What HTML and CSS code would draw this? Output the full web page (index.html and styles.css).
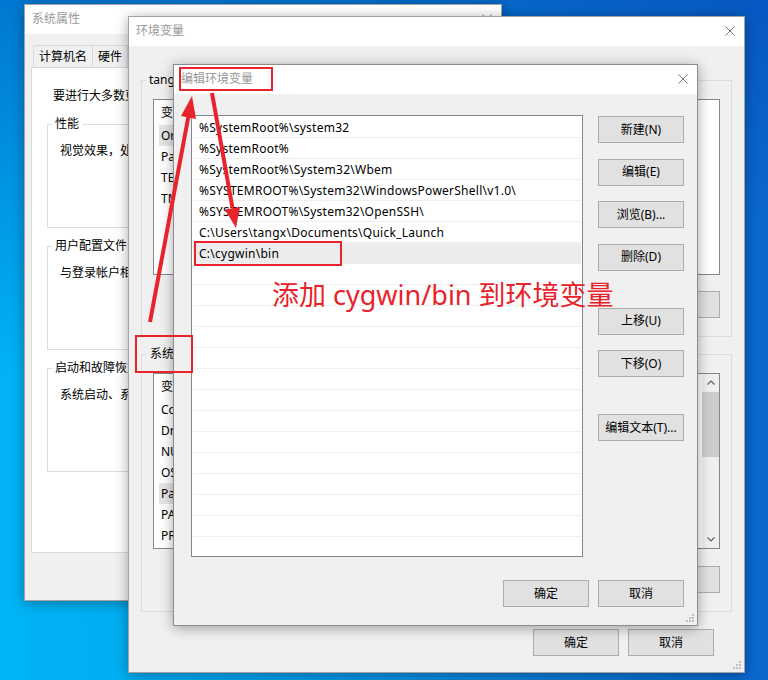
FILE: index.html
```html
<!DOCTYPE html>
<html lang="zh-CN">
<head>
<meta charset="utf-8">
<title>编辑环境变量</title>
<link rel="stylesheet" href="styles.css">
</head>
<body>
<div class="desktop">

  <section class="win win-sys">
    <header class="titlebar">
      <span class="title">系统属性</span>
      <svg class="close" width="10" height="10" viewBox="0 0 10 10"><path d="M0.5 0.5L9.5 9.5M9.5 0.5L0.5 9.5"/></svg>
    </header>
    <div class="sys-body">
      <div class="tabs">
        <span class="tab">计算机名</span>
        <span class="tab">硬件</span>
        <span class="tab">高级</span>
        <span class="tab">系统保护</span>
        <span class="tab">远程</span>
      </div>
      <div class="panel">
        <p class="intro">要进行大多数更改，你必须作为管理员登录。</p>
        <div class="group group-white sys-group">
          <span class="group-label">性能</span>
          <p class="group-text">视觉效果，处理器计划，内存使用，以及虚拟内存</p>
        </div>
        <div class="group group-white sys-group">
          <span class="group-label">用户配置文件</span>
          <p class="group-text">与登录帐户相关的桌面设置</p>
        </div>
        <div class="group group-white sys-group">
          <span class="group-label">启动和故障恢复</span>
          <p class="group-text">系统启动、系统故障和调试信息</p>
        </div>
      </div>
    </div>
  </section>

  <section class="win win-env">
    <header class="titlebar">
      <span class="title">环境变量</span>
      <svg class="close" width="10" height="10" viewBox="0 0 10 10"><path d="M0.5 0.5L9.5 9.5M9.5 0.5L0.5 9.5"/></svg>
    </header>
    <div class="env-body">
      <div class="group group-gray env-group">
        <span class="group-label">tangx 的用户变量(U)</span>
        <div class="lv">
          <div class="lv-main">
            <div class="lv-head"><span class="col-name">变量</span></div>
            <div class="lv-row sel"><span class="col-name">OneDrive</span></div>
            <div class="lv-row"><span class="col-name">Path</span></div>
            <div class="lv-row"><span class="col-name">TEMP</span></div>
            <div class="lv-row"><span class="col-name">TMP</span></div>
          </div>
        </div>
        <div class="btn-row">
          <button class="btn">新建(N)...</button>
          <button class="btn">编辑(E)...</button>
          <button class="btn">删除(D)</button>
        </div>
      </div>

      <div class="group group-gray env-group env-group-sys">
        <span class="group-label">系统变量(S)</span>
        <div class="lv">
          <div class="lv-main">
            <div class="lv-head"><span class="col-name">变量</span></div>
            <div class="lv-row"><span class="col-name">ComSpec</span></div>
            <div class="lv-row"><span class="col-name">DriverData</span></div>
            <div class="lv-row"><span class="col-name">NUMBER_OF_PROCESSORS</span></div>
            <div class="lv-row"><span class="col-name">OS</span></div>
            <div class="lv-row sel"><span class="col-name">Path</span></div>
            <div class="lv-row"><span class="col-name">PATHEXT</span></div>
            <div class="lv-row"><span class="col-name">PROCESSOR_ARCHITECTURE</span></div>
          </div>
          <div class="vscroll">
            <div class="sb-arrow">
              <svg width="8" height="5" viewBox="0 0 8 5"><path d="M0.5 4.5L4 1L7.5 4.5"/></svg>
            </div>
            <div class="sb-thumb"></div>
            <div class="sb-track"></div>
            <div class="sb-arrow">
              <svg width="8" height="5" viewBox="0 0 8 5"><path d="M0.5 0.5L4 4L7.5 0.5"/></svg>
            </div>
          </div>
        </div>
        <div class="btn-row">
          <button class="btn">新建(W)...</button>
          <button class="btn">编辑(I)...</button>
          <button class="btn">删除(L)</button>
        </div>
      </div>

      <div class="dlg-foot env-foot">
        <button class="btn">确定</button>
        <button class="btn">取消</button>
      </div>
    </div>
    <svg class="grip" width="8" height="8" viewBox="0 0 8 8"><rect x="6" y="0" width="2" height="2"/><rect x="3" y="3" width="2" height="2"/><rect x="6" y="3" width="2" height="2"/><rect x="0" y="6" width="2" height="2"/><rect x="3" y="6" width="2" height="2"/><rect x="6" y="6" width="2" height="2"/></svg>
  </section>

  <section class="win win-edit">
    <header class="titlebar">
      <span class="title">编辑环境变量</span>
      <svg class="close" width="10" height="10" viewBox="0 0 10 10"><path d="M0.5 0.5L9.5 9.5M9.5 0.5L0.5 9.5"/></svg>
    </header>
    <div class="edit-body">
      <div class="edit-main">
        <div class="pathlist">
          <div class="path-row">%SystemRoot%\system32</div>
          <div class="path-row">%SystemRoot%</div>
          <div class="path-row">%SystemRoot%\System32\Wbem</div>
          <div class="path-row">%SYSTEMROOT%\System32\WindowsPowerShell\v1.0\</div>
          <div class="path-row">%SYSTEMROOT%\System32\OpenSSH\</div>
          <div class="path-row">C:\Users\tangx\Documents\Quick_Launch</div>
          <div class="path-row sel">C:\cygwin\bin</div>
          <div class="path-row"></div>
          <div class="path-row"></div>
          <div class="path-row"></div>
          <div class="path-row"></div>
          <div class="path-row"></div>
          <div class="path-row"></div>
          <div class="path-row"></div>
          <div class="path-row"></div>
          <div class="path-row"></div>
          <div class="path-row"></div>
          <div class="path-row"></div>
          <div class="path-row"></div>
          <div class="path-row"></div>
          <div class="path-row"></div>
          <div class="path-row"></div>
        </div>
        <div class="side-btns">
          <button class="btn">新建(N)</button>
          <button class="btn">编辑(E)</button>
          <button class="btn">浏览(B)...</button>
          <button class="btn">删除(D)</button>
          <button class="btn big-gap">上移(U)</button>
          <button class="btn">下移(O)</button>
          <button class="btn big-gap">编辑文本(T)...</button>
        </div>
      </div>
      <div class="dlg-foot edit-foot">
        <button class="btn">确定</button>
        <button class="btn">取消</button>
      </div>
    </div>
    <svg class="grip" width="8" height="8" viewBox="0 0 8 8"><rect x="6" y="0" width="2" height="2"/><rect x="3" y="3" width="2" height="2"/><rect x="6" y="3" width="2" height="2"/><rect x="0" y="6" width="2" height="2"/><rect x="3" y="6" width="2" height="2"/><rect x="6" y="6" width="2" height="2"/></svg>
  </section>

  <svg class="annot" width="768" height="680" viewBox="0 0 768 680">
    <rect x="180" y="68" width="92" height="22"/>
    <rect x="136" y="336" width="56" height="36"/>
    <rect x="195" y="242" width="146" height="23"/>
    <line x1="150" y1="322" x2="188.5" y2="116"/>
    <polygon class="head" points="192,96 196,119 181,116"/>
    <line x1="212" y1="93" x2="232.5" y2="208"/>
    <polygon class="head" points="236,228 240,207 225,209.5"/>
  </svg>
  <div class="note">添加 cygwin/bin 到环境变量</div>

</div>
</body>
</html>
```

FILE: styles.css
```css
* { box-sizing: border-box; }

body { margin: 0; }

.desktop {
  position: relative;
  width: 768px;
  height: 680px;
  overflow: hidden;
  font-family: "Noto Sans", "Noto Sans CJK SC", sans-serif;
  font-size: 12px;
  line-height: 18px;
  color: #000;
  background:
    linear-gradient(168deg, rgba(0, 45, 165, 0.45) 0%, rgba(0, 45, 165, 0) 45%),
    linear-gradient(90deg, #00b4f5 0%, #00acf2 22%, #0592e3 50%, #0a78d6 75%, #0a66cd 100%);
}

p { margin: 0; }

/* ---------- windows ---------- */
.win {
  position: absolute;
  display: flex;
  flex-direction: column;
  background: #f0f0f0;
  border: 1px solid #a3a3a3;
  box-shadow: 0 2px 12px rgba(0, 0, 0, 0.35);
  overflow: hidden;
}
.win-sys  { left: 24px;  top: 4px;  width: 478px; height: 597px; }
.win-env  { left: 128px; top: 16px; width: 617px; height: 657px; }
.win-edit { left: 173px; top: 64px; width: 525px; height: 562px; border-color: #8c8c8c; }

.titlebar {
  flex: none;
  height: 29px;
  background: #fff;
  display: flex;
  align-items: center;
  justify-content: space-between;
  padding: 0 9px 2px 7px;
}
.title { color: #999; }
.close path { stroke: #777; stroke-width: 1; fill: none; }

.grip { position: absolute; right: 3px; bottom: 3px; }
.grip rect { fill: #bdbdbd; }

/* ---------- buttons ---------- */
.btn {
  width: 86px;
  height: 27px;
  padding: 0;
  margin: 0;
  background: #e1e1e1;
  border: 1px solid #adadad;
  border-radius: 0;
  font: inherit;
  color: #000;
  display: flex;
  align-items: center;
  justify-content: center;
  flex: none;
}

/* ---------- group boxes ---------- */
.group { border: 1px solid #dcdcdc; }
.group-label {
  display: block;
  width: max-content;
  margin: -10px 0 0 4px;
  padding: 0 3px;
  line-height: 18px;
}
.group-white .group-label { background: #fff; }
.group-gray .group-label { background: #f0f0f0; }

/* ---------- system properties ---------- */
.sys-body { padding: 11px 6px 0; }
.tabs { display: flex; height: 22px; margin-left: 2px; }
.tab {
  border: 1px solid #d9d9d9;
  border-bottom: none;
  background: #f0f0f0;
  padding: 0 5px;
  line-height: 21px;
  margin-right: -1px;
  white-space: nowrap;
}
.panel {
  height: 486px;
  background: #fff;
  border: 1px solid #d9d9d9;
  padding: 19px 15px 0;
  white-space: nowrap;
}
.intro { margin-left: 6px; }
.sys-group { height: 104px; margin-top: 18px; }
.sys-group:first-of-type { margin-top: 19px; }
.group-text { margin: 9px 0 0 12px; }

/* ---------- environment variables ---------- */
.env-body {
  flex: 1;
  display: flex;
  flex-direction: column;
  padding: 34px 12px 0;
}
.env-group { padding: 0 11px 18px; }
.env-group .group-label { margin-left: -7px; }
.env-group-sys { margin-top: 17px; }
.env-group-sys .group-label { margin-left: -6px; }

.lv {
  display: flex;
  height: 176px;
  margin-top: 10px;
  background: #fff;
  border: 1px solid #828790;
  overflow: hidden;
  white-space: nowrap;
}
.lv-main { flex: 1; min-width: 0; }
.lv-head {
  display: flex;
  height: 24px;
  padding: 4px 0 0 7px;
  margin-bottom: 1px;
}
.lv-row {
  display: flex;
  width: 530px;
  height: 21px;
  line-height: 21px;
  margin-left: 5px;
  padding-left: 2px;
}
.lv-row.sel { background: #e5e5e5; }
.col-name { width: 180px; flex: none; }

.vscroll {
  width: 17px;
  flex: none;
  display: flex;
  flex-direction: column;
  background: #f0f0f0;
}
.sb-arrow {
  height: 17px;
  display: flex;
  align-items: center;
  justify-content: center;
}
.sb-arrow path { stroke: #606060; stroke-width: 1.2; fill: none; }
.sb-thumb { height: 65px; margin: 1px 0 0; background: #cdcdcd; }
.sb-track { flex: 1; }

.btn-row {
  display: flex;
  justify-content: flex-end;
  gap: 9px;
  margin-top: 16px;
}
.env-group-sys .btn-row { margin-top: 17px; }

.dlg-foot { display: flex; justify-content: flex-end; gap: 9px; }
.env-foot { margin-top: 17px; margin-right: 18px; }

/* ---------- edit dialog ---------- */
.edit-body {
  flex: 1;
  display: flex;
  flex-direction: column;
  padding: 21px 13px 18px 17px;
}
.edit-main { display: flex; gap: 15px; }
.pathlist {
  width: 392px;
  height: 442px;
  padding: 1px;
  background: #fff;
  border: 1px solid #828790;
  overflow: hidden;
  white-space: nowrap;
}
.path-row {
  height: 21px;
  line-height: 21px;
  padding-left: 6px;
  letter-spacing: 0.25px;
  border-bottom: 1px solid #efefef;
}
.path-row.sel { background: #ececec; }

.side-btns { display: flex; flex-direction: column; padding-top: 1px; }
.side-btns .btn + .btn { margin-top: 15.6px; }
.side-btns .btn.big-gap { margin-top: 37px; }
.edit-foot { margin-top: 23px; }

/* ---------- annotations ---------- */
.annot { position: absolute; left: 0; top: 0; pointer-events: none; }
.annot rect { fill: none; stroke: #e8232c; stroke-width: 2; }
.annot line { stroke: #e8232c; stroke-width: 4; }
.annot .head { fill: #e8232c; }

.note {
  position: absolute;
  left: 272px;
  top: 280px;
  font-family: "Noto Sans", "Noto Sans CJK SC", sans-serif;
  font-size: 27px;
  line-height: 30px;
  color: #e8232c;
  white-space: nowrap;
}
```
